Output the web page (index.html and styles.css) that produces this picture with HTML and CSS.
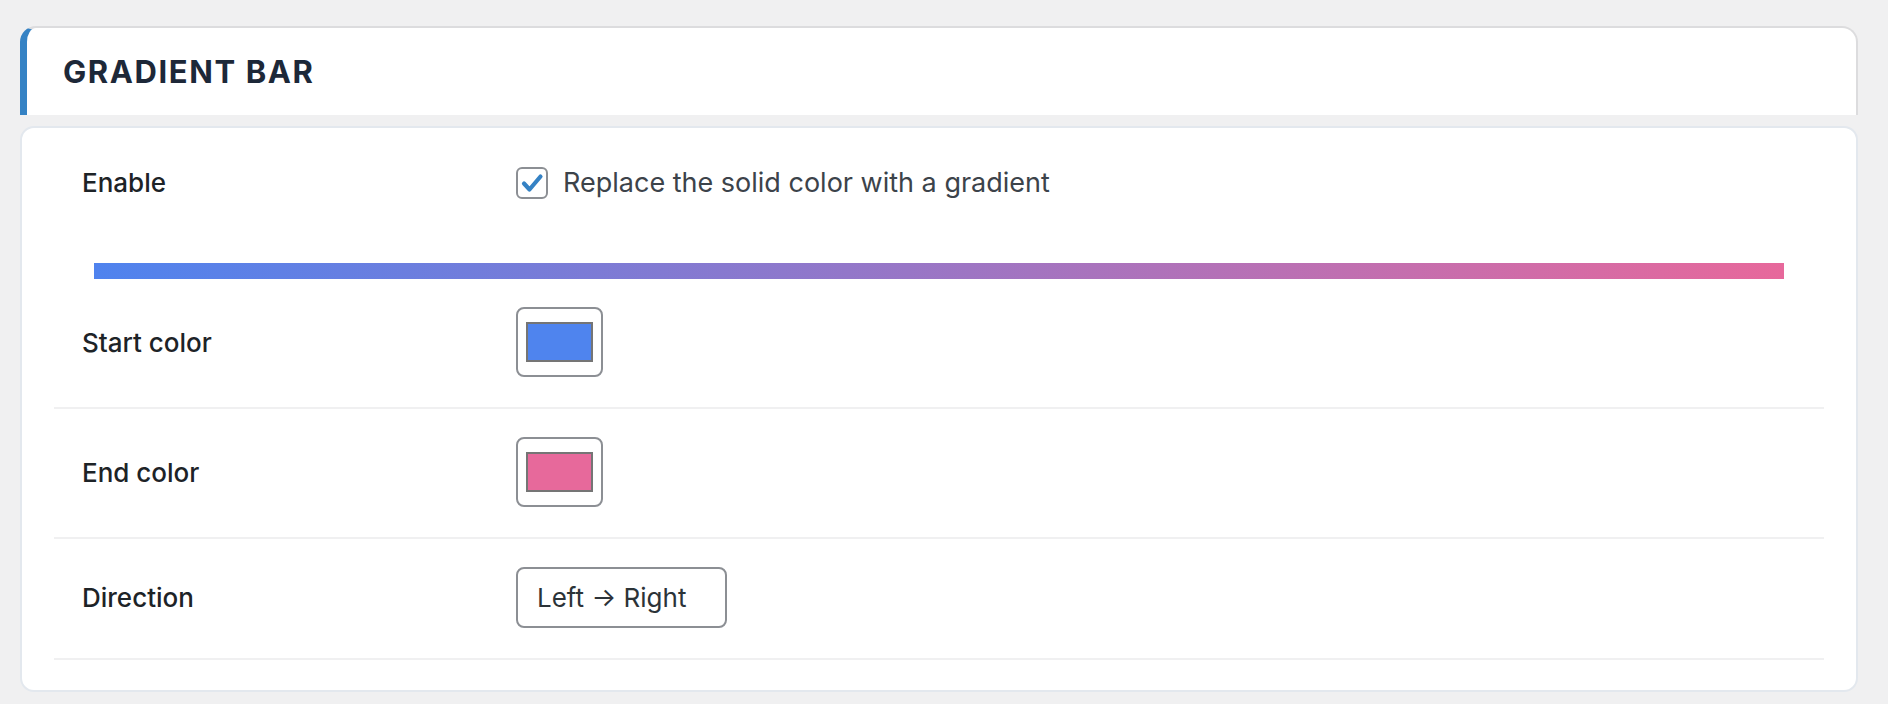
FILE: index.html
```html
<!DOCTYPE html>
<html>
<head>
<title>Gradient bar</title>
<link rel="stylesheet" href="styles.css">
</head>
<body>
<div class="wrap">
	<div class="box-head">
		<h2>GRADIENT BAR</h2>
	</div>
	<div class="box">
		<div class="row row-enable">
			<div class="row-label">Enable</div>
			<label class="check">
				<span class="checkbox">
					<svg width="28" height="28" viewBox="0 0 28 28"><path d="M6 14.5 L11.5 20.5 L22.5 7.5" fill="none" stroke="#3582c4" stroke-width="4.2" stroke-linecap="round" stroke-linejoin="round"/></svg>
				</span>
				Replace the solid color with a gradient
			</label>
		</div>
		<div class="preview"></div>
		<div class="row">
			<div class="row-label">Start color</div>
			<div class="swatch"><span class="swatch-color start"></span></div>
		</div>
		<div class="row">
			<div class="row-label">End color</div>
			<div class="swatch"><span class="swatch-color end"></span></div>
		</div>
		<div class="row">
			<div class="row-label">Direction</div>
			<div class="select">Left &rarr; Right</div>
		</div>
	</div>
</div>
</body>
</html>
```

FILE: styles.css
```css
	body{
		margin: 0;
		background-color: #f0f0f1;
		font-family: Inter, "Liberation Sans", sans-serif;
		color: #1d2327;
	}
	.wrap{
		padding: 26px 30px 0 20px;
	}
	.box-head{
		background-color: white;
		border-top: 2px solid #dcdcde;
		border-right: 2px solid #dcdcde;
		border-left: 7px solid #3582c4;
		border-radius: 16px 16px 0 0;
		height: 87px;
		display: flex;
		align-items: center;
		padding-left: 36px;
	}
	.box-head h2{
		margin: 0;
		font-size: 31px;
		font-weight: 700;
		letter-spacing: 1.6px;
		color: #1d2838;
	}
	.box{
		margin-top: 11px;
		background-color: white;
		border: 2px solid #e3e8ee;
		border-radius: 14px;
		padding: 0 32px 30px 32px;
	}
	.row{
		display: flex;
		align-items: center;
		padding: 28px 0 30px 0;
		border-bottom: 2px solid #f0f0f1;
	}
	.row-enable{
		border-bottom: 0;
		padding: 38px 0 0 0;
	}
	.row-label{
		width: 462px;
		flex-shrink: 0;
		box-sizing: border-box;
		padding-left: 28px;
		font-size: 26px;
		font-weight: 500;
	}
	.check{
		display: flex;
		align-items: center;
		gap: 15px;
		font-size: 27px;
		color: #3c434a;
	}
	.checkbox{
		width: 28px;
		height: 28px;
		border: 2px solid #8c8f94;
		border-radius: 6px;
		display: flex;
	}
	.preview{
		height: 16px;
		margin: 64px 40px 0 40px;
		background: linear-gradient(to right, #4f83ee, #e7689b);
	}
	.swatch{
		width: 67px;
		height: 40px;
		padding: 13px 8px;
		border: 2px solid #8c8f94;
		border-radius: 8px;
		display: flex;
	}
	.swatch-color{
		flex: 1;
		border: 2px solid #757575;
	}
	.swatch-color.start{
		background-color: #4f84ee;
	}
	.swatch-color.end{
		background-color: #e7699b;
	}
	.select{
		width: 188px;
		height: 57px;
		padding-left: 19px;
		border: 2px solid #8c8f94;
		border-radius: 8px;
		display: flex;
		align-items: center;
		font-size: 26px;
		color: #2c3338;
	}
```
